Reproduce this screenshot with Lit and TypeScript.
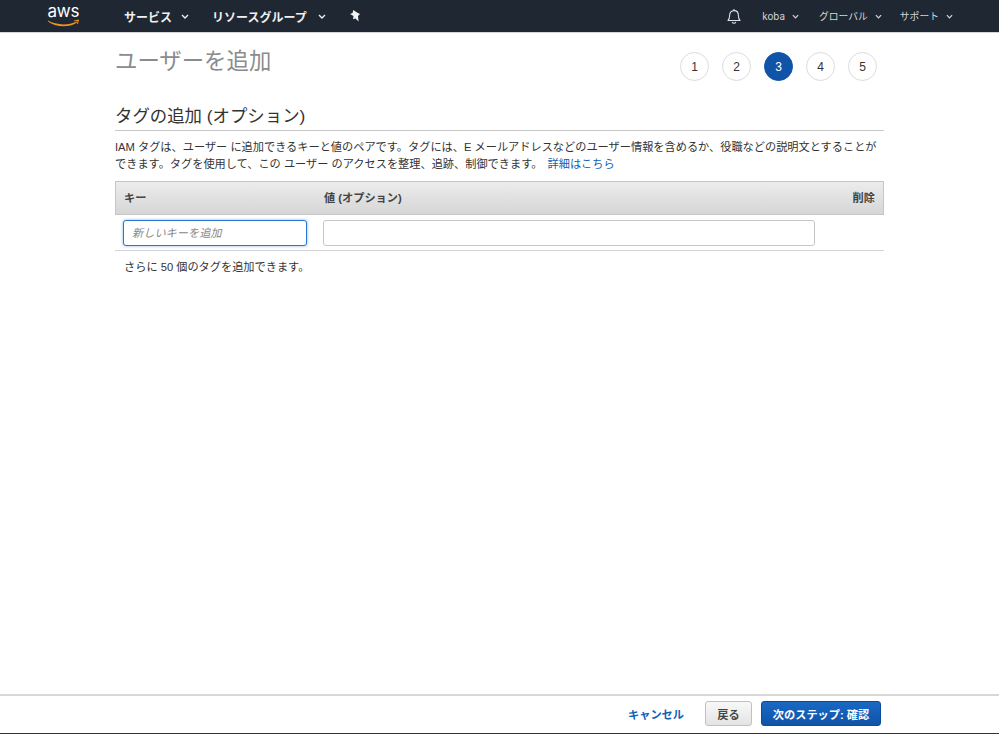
import { LitElement, html, css, svg } from 'lit';
import { customElement } from 'lit/decorators.js';

const caret = svg`<svg class="caret" width="8" height="5" viewBox="0 0 8 5"><path d="M1 1l3 3 3-3" fill="none" stroke="currentColor" stroke-width="1.4"/></svg>`;

@customElement('app-root')
export class AppRoot extends LitElement {
  static styles = css`
    :host {
      display: flex;
      flex-direction: column;
      height: 734px;
      overflow: hidden;
      background: #fff;
      color: #333;
      font-family: "Liberation Sans", "Noto Sans CJK JP", sans-serif;
      font-size: 11.2px;
    }

    /* ---- nav ---- */
    .nav {
      display: flex;
      align-items: center;
      height: 32px;
      flex: none;
      background: #1f2733;
      border-bottom: 1px solid #d5d5d5;
      color: #e6e8ea;
      padding: 0 46px 0 47px;
      font-family: "Inter", "Noto Sans CJK JP", sans-serif;
    }
    .logo { display: block; margin-right: 44px; overflow: visible; }
    .menu {
      display: flex;
      align-items: center;
      font-size: 12px;
      font-weight: 700;
      color: #eef0f2;
    }
    .menu .caret { margin-left: 9px; }
    .services { margin-right: 23px; }
    .groups { margin-right: 24px; }
    .groups .caret { margin-left: 11px; }
    .pin { display: block; }
    .right { margin-left: auto; display: flex; align-items: center; }
    .bell { display: block; margin-right: 21px; }
    .item {
      display: flex;
      align-items: center;
      font-size: 9.8px;
      color: #d3d6d9;
    }
    .item .caret { margin-left: 7px; width: 7px; }
    .item.user { margin-right: 20px; }
    .item.region { margin-right: 18px; }

    /* ---- content ---- */
    .main {
      flex: 1;
      width: 769px;
      margin-left: 115px;
    }
    .top {
      display: flex;
      justify-content: space-between;
      height: 70px;
    }
    .title {
      margin: 14px 0 0;
      font-size: 22.4px;
      line-height: 30px;
      font-weight: 400;
      color: #8a8c8e;
    }
    .steps {
      display: flex;
      gap: 13px;
      margin: 19px 7px 0 0;
    }
    .step {
      box-sizing: border-box;
      width: 29px;
      height: 29px;
      border-radius: 50%;
      border: 1px solid #dcdcdc;
      display: flex;
      align-items: center;
      justify-content: center;
      font-size: 12px;
      color: #333;
    }
    .step.active { background: #0f54a8; border-color: #0f54a8; color: #fff; }
    h2 {
      margin: 0;
      font-size: 17.4px;
      line-height: 27px;
      font-weight: 400;
      color: #333;
      border-bottom: 1px solid #c8c8c8;
      height: 27px;
    }
    .desc {
      margin: 8px 0 8px;
      font-size: 11.2px;
      line-height: 17px;
      color: #333;
    }
    a { color: #0f5fb8; text-decoration: none; }
    .desc a { margin-left: 2px; }

    .thead, .row {
      display: grid;
      grid-template-columns: 200px 1fr 60px;
      align-items: center;
    }
    .thead {
      box-sizing: border-box;
      height: 34px;
      padding: 0 8px 2px;
      font-weight: 700;
      color: #444;
      background: linear-gradient(#ececec, #d6d6d6);
      border: 1px solid #c6c6c6;
    }
    .thead .del { text-align: right; }
    .row {
      box-sizing: border-box;
      height: 36px;
      padding: 0 8px;
      border-bottom: 1px solid #d5d5d5;
    }
    input {
      box-sizing: border-box;
      display: block;
      height: 26px;
      padding: 0 8px;
      border: 1px solid #c6c6c6;
      border-radius: 3px;
      font: inherit;
      outline: none;
      background: #fff;
    }
    input::placeholder { color: #888; font-style: italic; opacity: 1; }
    .key {
      width: 184px;
      border-color: #2a78d6;
      box-shadow: 0 0 3px rgba(42, 120, 214, 0.6);
    }
    .val { width: 492px; }
    .more { margin: 8px 0 0 9px; line-height: 17px; color: #333; }

    /* ---- footer ---- */
    .footer {
      flex: none;
      box-sizing: border-box;
      height: 40px;
      display: flex;
      align-items: center;
      justify-content: flex-end;
      padding: 0 118px 2px 0;
      border-top: 2px solid #d8d8d8;
      border-bottom: 1px solid #333;
      font-weight: 700;
    }
    .cancel { margin-right: 21px; color: #0f5fb8; }
    button {
      box-sizing: border-box;
      height: 25px;
      border-radius: 3px;
      font: inherit;
      font-weight: 700;
      padding: 0;
    }
    .back {
      width: 47px;
      margin-right: 9px;
      color: #444;
      border: 1px solid #c0c0c0;
      background: linear-gradient(#f8f8f8, #e4e4e4);
    }
    .next {
      width: 120px;
      color: #fff;
      border: 1px solid #0d4c9c;
      background: linear-gradient(#1a68c4, #0f54a8);
    }
  `;

  render() {
    return html`
      <div class="nav">
        <svg class="logo" width="33" height="26" viewBox="0 0 33 26">
          <text x="0.5" y="14" font-size="17" fill="#fff" font-family="Inter, Liberation Sans, sans-serif" textLength="32">aws</text>
          <path d="M1 17.6c8 4.6 20 5.2 28.6 1l.5.9c-8.4 5.6-21.8 5-29.4-1.3z" fill="#f0921e"/>
          <path d="M27 17.4l5-.9-1 4.6-.9-.2.4-2.9-3.4.3z" fill="#f0921e"/>
        </svg>
        <div class="menu services">サービス ${caret}</div>
        <div class="menu groups">リソースグループ ${caret}</div>
        <svg class="pin" width="11" height="12" viewBox="0 0 11 12">
          <path d="M3.2 0l3.8 2.4L10 4 8 6l.6 5.6L5.4 8.6 3 9.2l.5-3.2L0 4l2.6-1z" fill="#f2f3f4"/>
        </svg>
        <div class="right">
          <svg class="bell" width="14" height="16" viewBox="0 0 14 16">
            <path d="M1 12.5c1.3-1.3 1.6-2.6 1.6-5C2.6 4.6 4.4 2.6 7 2.6s4.4 2 4.4 4.9c0 2.4.3 3.7 1.6 5z" fill="none" stroke="#dfe1e3" stroke-width="1.1" stroke-linejoin="round"/>
            <path d="M5.2 13.8c.3 1 1 1.5 1.8 1.5s1.5-.5 1.8-1.5M7 1v1.5" fill="none" stroke="#dfe1e3" stroke-width="1.1"/>
          </svg>
          <div class="item user">koba ${caret}</div>
          <div class="item region">グローバル ${caret}</div>
          <div class="item">サポート ${caret}</div>
        </div>
      </div>

      <div class="main">
        <div class="top">
          <h1 class="title">ユーザーを追加</h1>
          <div class="steps">
            ${[1, 2, 3, 4, 5].map(
              (n) => html`<div class="step ${n === 3 ? 'active' : ''}">${n}</div>`
            )}
          </div>
        </div>
        <h2>タグの追加 (オプション)</h2>
        <p class="desc">
          IAM タグは、ユーザー に追加できるキーと値のペアです。タグには、E メールアドレスなどのユーザー情報を含めるか、役職などの説明文とすることができます。タグを使用して、この ユーザー のアクセスを整理、追跡、制御できます。
          <a href="#">詳細はこちら</a>
        </p>
        <div class="thead">
          <div>キー</div>
          <div>値 (オプション)</div>
          <div class="del">削除</div>
        </div>
        <div class="row">
          <input class="key" placeholder="新しいキーを追加" />
          <input class="val" />
        </div>
        <div class="more">さらに 50 個のタグを追加できます。</div>
      </div>

      <div class="footer">
        <a class="cancel" href="#">キャンセル</a>
        <button class="back">戻る</button>
        <button class="next">次のステップ: 確認</button>
      </div>
    `;
  }
}
